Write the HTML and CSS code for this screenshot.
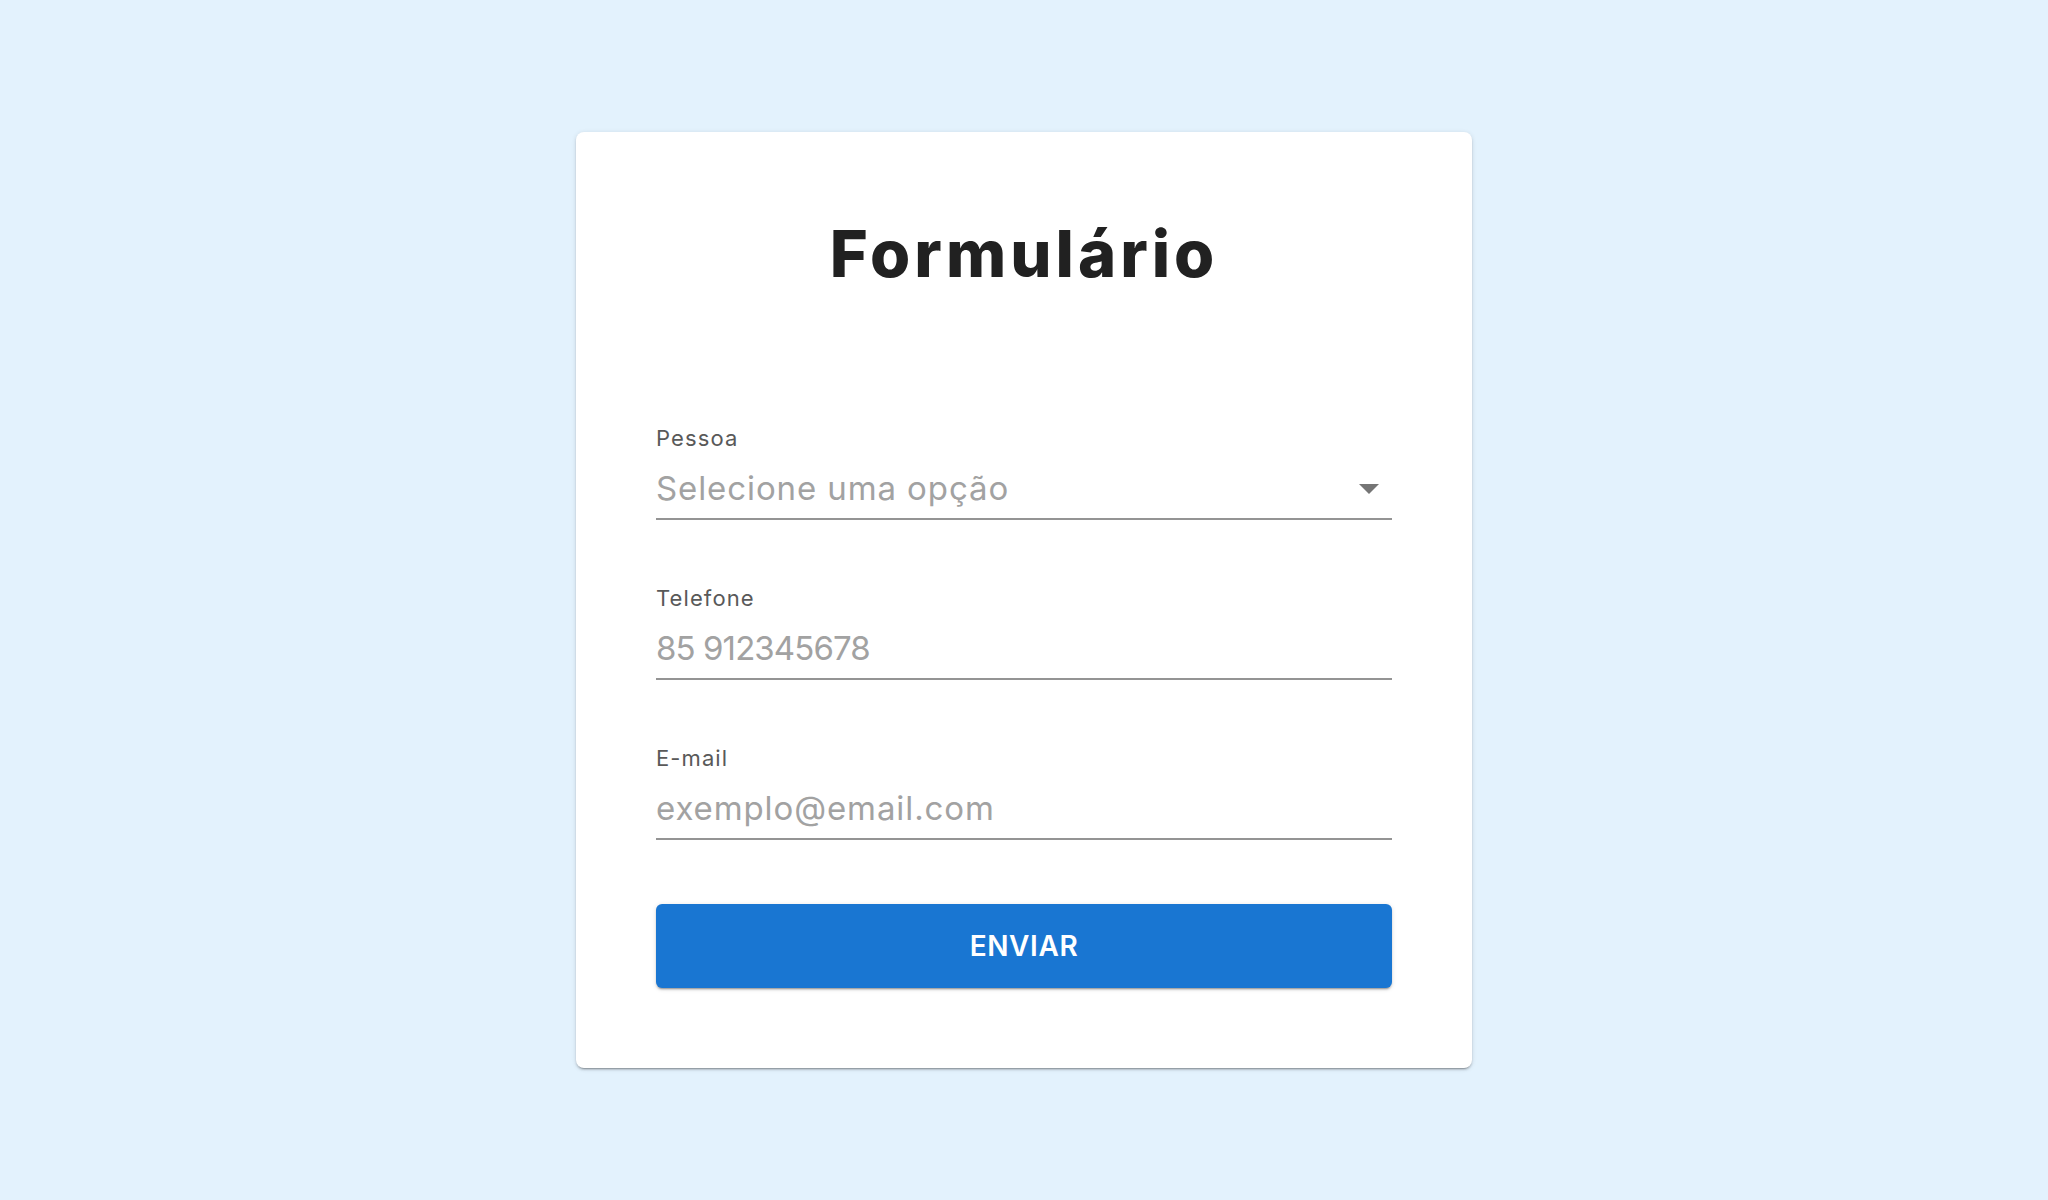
FILE: index.html
```html
<!DOCTYPE html>
<html lang="pt-BR">
<head>
<meta charset="utf-8">
<title>Formulário</title>
<link rel="stylesheet" href="styles.css">
</head>
<body>
<main class="page">
  <form class="card">
    <h1 class="title">Formulário</h1>
    <div class="fields">
      <div class="field">
        <label class="label">Pessoa</label>
        <div class="control select">
          <span class="placeholder">Selecione uma opção</span>
          <svg class="arrow" width="20" height="10" viewBox="0 0 20 10"><path d="M0 0 L10 10 L20 0 Z" fill="#757575"/></svg>
        </div>
      </div>
      <div class="field">
        <label class="label" for="tel">Telefone</label>
        <div class="control">
          <input id="tel" class="input input-tel" type="text" placeholder="85 912345678">
        </div>
      </div>
      <div class="field">
        <label class="label" for="email">E-mail</label>
        <div class="control">
          <input id="email" class="input" type="text" placeholder="exemplo@email.com">
        </div>
      </div>
    </div>
    <button type="button" class="button">ENVIAR</button>
  </form>
</main>
</body>
</html>
```

FILE: styles.css
```css
* { box-sizing: border-box; }
html, body { margin: 0; padding: 0; }
body {
  background: #e3f2fd;
  font-family: "Inter", "Noto Sans", sans-serif;
  min-height: 100vh;
}
.page {
  display: flex;
  justify-content: center;
  padding-top: 132px;
}
.card {
  width: 896px;
  background: #ffffff;
  border-radius: 8px;
  padding: 80px;
  box-shadow: 0 3px 1px -2px rgba(0,0,0,0.2), 0 2px 2px 0 rgba(0,0,0,0.14), 0 1px 5px 0 rgba(0,0,0,0.12);
  display: flex;
  flex-direction: column;
}
.title {
  margin: 10px 0 141px;
  font-size: 65px;
  line-height: 64px;
  font-weight: 800;
  color: #212121;
  text-align: center;
  letter-spacing: 4px;
}
.fields {
  display: flex;
  flex-direction: column;
  gap: 67px;
}
.field {
  display: flex;
  flex-direction: column;
}
.label {
  display: block;
  font-size: 22px;
  line-height: 22px;
  color: #595959;
  letter-spacing: 1.1px;
  margin-bottom: 15px;
}
.control {
  height: 56px;
  padding-bottom: 6px;
  border-bottom: 2px solid #949494;
}
.select {
  display: flex;
  align-items: flex-start;
  justify-content: space-between;
}
.placeholder, .input {
  font-family: "Inter", "Noto Sans", sans-serif;
  font-size: 33px;
  line-height: 48px;
  height: 48px;
  color: #a2a2a2;
  letter-spacing: 0.9px;
}
.input-tel {
  letter-spacing: -0.9px;
}
.arrow {
  margin-top: 20px;
  margin-right: 13px;
}
.input {
  display: block;
  width: 100%;
  border: none;
  outline: none;
  padding: 0;
  margin: 0;
  background: transparent;
  color: #212121;
}
.input::placeholder {
  color: #a2a2a2;
  opacity: 1;
}
.button {
  margin-top: 64px;
  height: 84px;
  border: none;
  border-radius: 6px;
  background: #1976d2;
  color: #ffffff;
  font-family: "Inter", "Noto Sans", sans-serif;
  font-size: 28px;
  font-weight: 600;
  letter-spacing: 0.6px;
  box-shadow: 0 3px 1px -2px rgba(0,0,0,0.2), 0 2px 2px 0 rgba(0,0,0,0.14), 0 1px 5px 0 rgba(0,0,0,0.12);
  cursor: pointer;
}
```
